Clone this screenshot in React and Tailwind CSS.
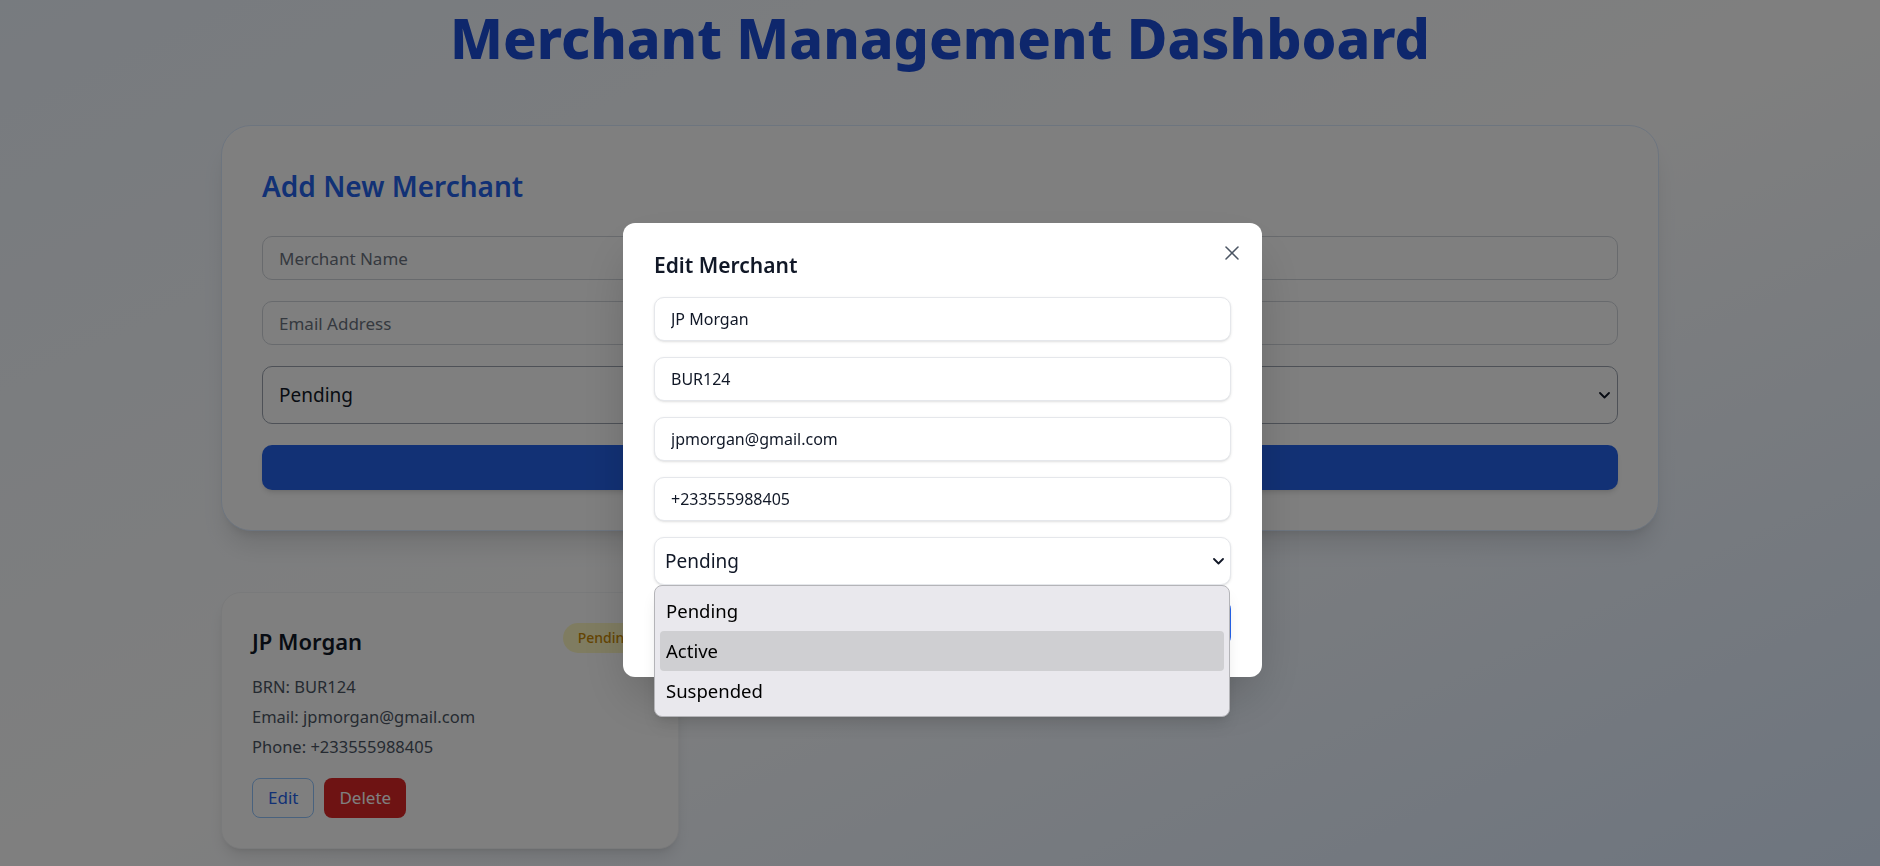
import React from "react";
import { X } from "lucide-react";

function Chevron({ className }) {
  return (
    <svg className={className} width="11" height="7" viewBox="0 0 11 7" fill="none">
      <polyline points="1,1 5.5,5.5 10,1" stroke="currentColor" strokeWidth="1.8" strokeLinecap="round" strokeLinejoin="round" />
    </svg>
  );
}

function MerchantCard() {
  return (
    <div className="rounded-[20px] border border-[#f3f4f6] bg-white p-[30px] shadow-lg">
      <div className="flex items-start justify-between">
        <h3 className="text-[22px] font-semibold leading-[36px] text-[#111827]">JP Morgan</h3>
        <span className="flex h-[30px] items-center rounded-full bg-[#fef9c3] px-[15px] text-sm font-medium text-[#ca8a04]">
          Pending
        </span>
      </div>
      <div className="mt-[13px] text-[16.5px] leading-[30px] text-[#4b5563]">
        <p>BRN: BUR124</p>
        <p>Email: jpmorgan@gmail.com</p>
        <p>Phone: +233555988405</p>
      </div>
      <div className="mt-4 flex gap-[10px]">
        <button className="flex h-10 items-center rounded-lg border border-[#93c5fd] bg-white px-[15px] text-[17px] text-[#2563eb]">
          Edit
        </button>
        <button className="flex h-10 items-center rounded-lg bg-[#dc2626] px-[15px] text-[17px] text-white">
          Delete
        </button>
      </div>
    </div>
  );
}

export default function App() {
  const bgInput =
    "h-[44px] w-full rounded-[10px] border border-[#d1d5db] bg-white px-4 text-[17px] text-[#111827] placeholder:text-[#6b7280] outline-none";
  const modalInput =
    "h-11 w-full rounded-[10px] border border-[#e5e7eb] bg-white px-4 text-[16px] text-[#111827] shadow-sm outline-none";

  return (
    <div className="relative min-h-screen bg-linear-to-br from-[#eff6ff] via-white to-[#dbeafe] font-['Noto_Sans',sans-serif]">
      <div className="mx-auto max-w-[1438px] pb-12">
        <h1 className="pt-[10px] text-center text-[55.5px] font-extrabold leading-[56px] text-[#1d4ed8]">
          Merchant Management Dashboard
        </h1>

        <section className="mt-[59px] rounded-[30px] border border-[#dbeafe] bg-white p-10 shadow-xl">
          <h2 className="text-[28px] font-semibold leading-[41px] text-[#2563eb]">Add New Merchant</h2>
          <div className="mt-[29px] grid grid-cols-2 gap-x-4 gap-y-[21px]">
            <input className={bgInput} placeholder="Merchant Name" />
            <input className={bgInput} placeholder="Business Registration Number" />
            <input className={bgInput} placeholder="Email Address" />
            <input className={bgInput} placeholder="Phone Number" />
            <div className="col-span-2 flex h-[58px] items-center justify-between rounded-[10px] border border-[#9ca3af] bg-white pl-4 pr-[7px] text-[19px] text-[#111827]">
              <span>Pending</span>
              <Chevron className="text-[#111827]" />
            </div>
            <button className="col-span-2 h-[45px] rounded-[10px] bg-[#2563eb] text-[18px] font-semibold text-white shadow-md">
              Add Merchant
            </button>
          </div>
        </section>

        <div className="mt-[61px] grid grid-cols-3 gap-8">
          <MerchantCard />
        </div>
      </div>

      <div className="fixed inset-0 flex justify-center bg-black/50 pl-[5px] pt-[223px]">
        <div className="relative h-fit w-[639px] rounded-xl bg-white px-[31px] pb-8 pt-[26px] shadow-2xl">
          <button className="absolute right-[18px] top-[18px] text-[#4b5563]">
            <X size={24} strokeWidth={1.5} />
          </button>
          <h2 className="mb-4 text-[21px] font-semibold leading-8 text-[#111827]">Edit Merchant</h2>
          <div className="flex flex-col gap-4">
            <input className={modalInput} value="JP Morgan" readOnly />
            <input className={modalInput} value="BUR124" readOnly />
            <input className={modalInput} value="jpmorgan@gmail.com" readOnly />
            <input className={modalInput} value="+233555988405" readOnly />
            <div className="relative">
              <div className="flex h-12 items-center justify-between rounded-[10px] border border-[#e5e7eb] bg-white pl-[10px] pr-[6px] text-[19px] text-[#111827] shadow-sm">
                <span>Pending</span>
                <Chevron className="text-[#111827]" />
              </div>
              <div className="absolute left-0 right-[1px] top-full z-10 rounded-lg border border-[#b4b4b8] bg-[#e9e8ed] p-[5px] text-[18.5px] text-black shadow-lg">
                <div className="flex h-10 items-center rounded px-[6px]">Pending</div>
                <div className="flex h-10 items-center rounded bg-[#cfcfd2] px-[6px]">Active</div>
                <div className="flex h-10 items-center rounded px-[6px]">Suspended</div>
              </div>
            </div>
            <button className="h-11 w-full rounded-lg bg-[#2563eb] text-white">Update Merchant</button>
          </div>
        </div>
      </div>
    </div>
  );
}
